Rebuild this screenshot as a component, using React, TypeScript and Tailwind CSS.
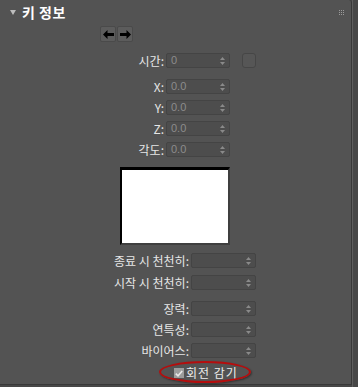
import React from "react";

const font = { fontFamily: '"Noto Sans CJK KR", "Noto Sans", sans-serif' };

function Spinner({ value, width }: { value?: string; width: string }) {
  return (
    <div
      className={`relative flex h-[15px] ${width} items-center rounded-[2px] border border-[#444444] bg-[#4d4d4d] pl-[4px]`}
    >
      <span className="text-[11px] leading-none text-[#8c8c8c]" style={{ fontFamily: '"Liberation Sans", sans-serif' }}>
        {value}
      </span>
      <svg className="absolute right-[4px] top-[3px]" width="5" height="8" viewBox="0 0 5 8">
        <path d="M2.5 0 L5 3 L0 3 Z" fill="#8a8a8a" />
        <path d="M2.5 8 L5 5 L0 5 Z" fill="#8a8a8a" />
      </svg>
    </div>
  );
}

function Row({
  label,
  value,
  labelWidth,
  spinWidth,
  extra,
}: {
  label: string;
  value?: string;
  labelWidth: string;
  spinWidth: string;
  extra?: React.ReactNode;
}) {
  return (
    <div className="flex h-[15px] items-center">
      <div className={`${labelWidth} shrink-0 text-right text-[12px] leading-none text-[#e6e6e6]`}>{label}</div>
      <div className="ml-[2px]">
        <Spinner value={value} width={spinWidth} />
      </div>
      {extra}
    </div>
  );
}

export default function App() {
  return (
    <div className="flex h-[387px] w-[358px] bg-[#474747]" style={font}>
      <div className="relative h-[385px] w-[352px] rounded-tr-[3px] border-r border-b border-[#383838] bg-[#535353]">
        {/* header */}
        <div className="flex h-[24px] items-center pl-[10px]">
          <svg width="6" height="5" viewBox="0 0 6 5" className="mt-[1px]">
            <path d="M0 0 L6 0 L3 5 Z" fill="#bdbdbd" />
          </svg>
          <span className="ml-[6px] text-[14px] font-bold leading-none tracking-[0.5px] text-white">키 정보</span>
          <div className="ml-auto mr-[7px] grid grid-cols-3 gap-[1px]">
            {Array.from({ length: 9 }).map((_, i) => (
              <div key={i} className="h-[1px] w-[1px] bg-[#9a9a9a]" />
            ))}
          </div>
        </div>

        {/* arrow buttons */}
        <div className="ml-[100px] mt-[2px] flex gap-[1px]">
          <div className="flex h-[16px] w-[16px] items-center justify-center rounded-[2px] border border-[#4a4a4a] bg-[#5c5c5c]">
            <svg width="11" height="9" viewBox="0 0 11 9">
              <path d="M0 4.5 L4.5 0 L4.5 3 L11 3 L11 6 L4.5 6 L4.5 9 Z" fill="#000" />
            </svg>
          </div>
          <div className="flex h-[16px] w-[16px] items-center justify-center rounded-[2px] border border-[#4a4a4a] bg-[#5c5c5c]">
            <svg width="11" height="9" viewBox="0 0 11 9">
              <path d="M11 4.5 L6.5 0 L6.5 3 L0 3 L0 6 L6.5 6 L6.5 9 Z" fill="#000" />
            </svg>
          </div>
        </div>

        {/* time & position */}
        <div className="mt-[11px] flex flex-col">
          <Row
            label="시간:"
            value="0"
            labelWidth="w-[164px]"
            spinWidth="w-[64px]"
            extra={
              <div className="ml-[12px] h-[15px] w-[14px] rounded-[3px] border border-[#464646] bg-[#565656]" />
            }
          />
          <div className="mt-[11px] flex flex-col gap-[6px]">
            <Row label="X:" value="0.0" labelWidth="w-[164px]" spinWidth="w-[64px]" />
            <Row label="Y:" value="0.0" labelWidth="w-[164px]" spinWidth="w-[64px]" />
            <Row label="Z:" value="0.0" labelWidth="w-[164px]" spinWidth="w-[64px]" />
            <Row label="각도:" value="0.0" labelWidth="w-[164px]" spinWidth="w-[64px]" />
          </div>
        </div>

        {/* preview */}
        <div className="ml-[120px] mt-[10px] h-[78px] w-[110px] border-t-[3px] border-l-[2px] border-r-2 border-b-2 border-t-black border-l-black border-r-[#3f3f3f] border-b-[#3f3f3f] bg-white" />

        {/* TCB */}
        <div className="mt-[8px] flex flex-col gap-[7px]">
          <Row label="종료 시 천천히:" labelWidth="w-[189px]" spinWidth="w-[65px]" />
          <Row label="시작 시 천천히:" labelWidth="w-[189px]" spinWidth="w-[65px]" />
        </div>
        <div className="mt-[11px] flex flex-col gap-[6px]">
          <Row label="장력:" labelWidth="w-[189px]" spinWidth="w-[65px]" />
          <Row label="연특성:" labelWidth="w-[189px]" spinWidth="w-[65px]" />
          <Row label="바이어스:" labelWidth="w-[189px]" spinWidth="w-[65px]" />
        </div>

        {/* checkbox */}
        <div className="relative ml-[174px] mt-[9px] flex h-[12px] items-center">
          <div className="flex h-[10px] w-[10px] items-center justify-center bg-[#9c9c9c]">
            <svg width="8" height="7" viewBox="0 0 8 7">
              <path d="M0.8 3.6 L3 5.8 L7.2 1" stroke="#e8e8e8" strokeWidth="1.6" fill="none" />
            </svg>
          </div>
          <span className="ml-[2px] text-[12px] leading-none tracking-[1px] text-[#ececec]">회전 감기</span>
          <div className="absolute left-[-15px] top-[-6px] h-[22px] w-[92px] rounded-[50%] border-2 border-[#b50d0d] shadow-[1px_1px_2px_rgba(0,0,0,0.4)]" />
        </div>
      </div>
      <div className="h-[387px] w-[1px] bg-[#5e5e5e]" />
    </div>
  );
}
